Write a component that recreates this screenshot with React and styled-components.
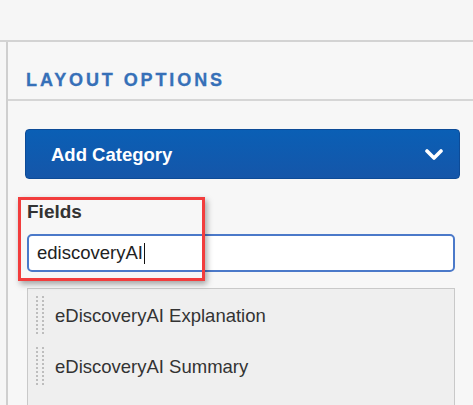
import React from 'react'
import styled, { createGlobalStyle } from 'styled-components'

const GlobalStyle = createGlobalStyle`
  html, body {
    margin: 0;
    padding: 0;
    background: #f6f6f6;
    font-family: "Liberation Sans", Arial, sans-serif;
    overflow: hidden;
  }
`

const Page = styled.div`
  width: 473px;
  height: 405px;
  overflow: hidden;
`

const TopBar = styled.div`
  height: 40px;
  border-bottom: 2px solid #d3d3d3;
`

const Main = styled.div`
  display: flex;
  padding-left: 6px;
  height: 363px;
`

const Panel = styled.div`
  flex: 1;
  border-left: 2px solid #cfcfcf;
  background: #f7f7f7;
`

const Header = styled.div`
  height: 59px;
  padding: 28px 0 0 18px;
  box-sizing: border-box;
  border-bottom: 2px solid #d6d6d6;
`

const Heading = styled.h2`
  margin: 0;
  font-size: 18px;
  line-height: 20px;
  font-weight: bold;
  letter-spacing: 2.9px;
  color: #3670b8;
  -webkit-text-stroke: 0.3px #3670b8;
`

const Body = styled.div`
  padding: 28px 13px 0 17px;
`

const CategoryButton = styled.button`
  display: flex;
  align-items: center;
  justify-content: space-between;
  width: 100%;
  height: 50px;
  padding: 2px 16px 0 25px;
  border: 1px solid #0d4b97;
  border-radius: 4px;
  background: linear-gradient(#0a5fb5, #1556a9);
  color: #fff;
  font-family: inherit;
  font-size: 18.5px;
  font-weight: bold;
  cursor: pointer;
`

const FieldGroup = styled.div`
  position: relative;
  margin: 22px 5px 0 2px;
`

const Label = styled.div`
  font-size: 19px;
  line-height: 22px;
  font-weight: bold;
  color: #333;
`

const SearchBox = styled.div`
  display: flex;
  align-items: center;
  height: 38px;
  margin-top: 11px;
  padding-left: 8px;
  box-sizing: border-box;
  border: 2px solid #4b79c9;
  border-radius: 5px;
  background: #fff;
  font-size: 18.5px;
  color: #222;
`

const Caret = styled.span`
  display: inline-block;
  width: 1px;
  height: 21px;
  margin-left: 1px;
  background: #111;
`

const Highlight = styled.div`
  position: absolute;
  left: -9px;
  top: -4px;
  width: 187px;
  height: 84px;
  box-sizing: border-box;
  border: 3px solid #f23d3d;
  box-shadow: 2px 3px 6px rgba(0, 0, 0, 0.35);
  pointer-events: none;
`

const FieldList = styled.div`
  margin: 16px 5px 0 2px;
  height: 140px;
  border: 1px solid #c9c9c9;
  background: #efefef;
  padding-top: 1px;
`

const FieldRow = styled.div`
  display: flex;
  align-items: center;
  height: 51px;
  padding-left: 8px;
  gap: 11px;
  font-size: 18.5px;
  color: #333;
`

const Grip = () => (
  <svg width="8" height="40" viewBox="0 0 8 40">
    {Array.from({ length: 10 }).map((_, i) => (
      <g key={i} fill="#bdbdbd">
        <rect x="0" y={i * 4} width="2" height="2" />
        <rect x="6" y={i * 4} width="2" height="2" />
      </g>
    ))}
  </svg>
)

const Chevron = () => (
  <svg width="18" height="12" viewBox="0 0 18 12">
    <polyline points="2,2 9,9 16,2" fill="none" stroke="#fff" strokeWidth="3.6" strokeLinecap="round" strokeLinejoin="round" />
  </svg>
)

const fields = ['eDiscoveryAI Explanation', 'eDiscoveryAI Summary']

export default function App() {
  return (
    <Page>
      <GlobalStyle />
      <TopBar />
      <Main>
        <Panel>
          <Header>
            <Heading>LAYOUT OPTIONS</Heading>
          </Header>
          <Body>
            <CategoryButton>
              Add Category
              <Chevron />
            </CategoryButton>
            <FieldGroup>
              <Label>Fields</Label>
              <SearchBox>
                ediscoveryAI<Caret />
              </SearchBox>
              <Highlight />
            </FieldGroup>
            <FieldList>
              {fields.map((f) => (
                <FieldRow key={f}>
                  <Grip />
                  {f}
                </FieldRow>
              ))}
            </FieldList>
          </Body>
        </Panel>
      </Main>
    </Page>
  )
}
